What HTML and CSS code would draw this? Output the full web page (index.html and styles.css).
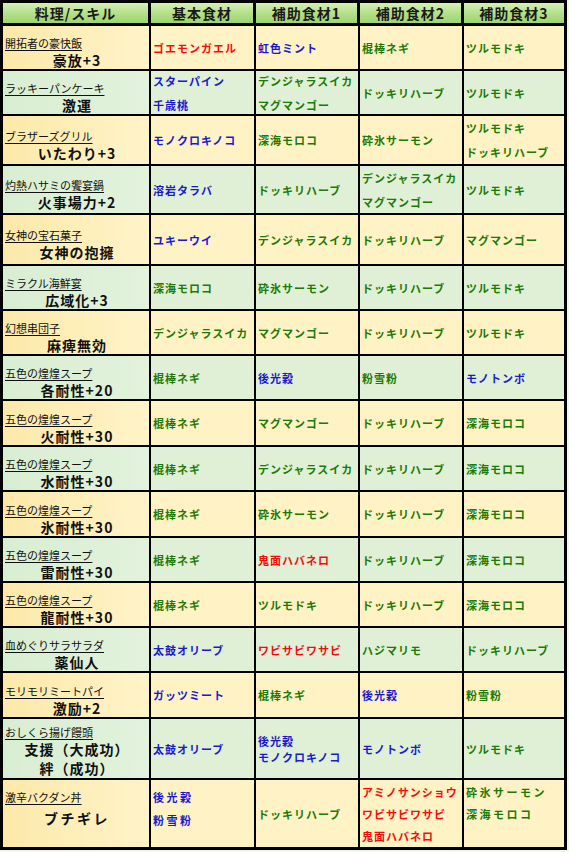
FILE: index.html
```html
<!DOCTYPE html>
<html lang="ja">
<head>
<meta charset="utf-8">
<title>料理/スキル 食材表</title>
<link rel="stylesheet" href="styles.css">
</head>
<body>
<table class="recipes">
  <thead>
    <tr>
      <th class="c1">料理/スキル</th>
      <th class="c2">基本食材</th>
      <th class="c3">補助食材1</th>
      <th class="c4">補助食材2</th>
      <th class="c5">補助食材3</th>
    </tr>
  </thead>
  <tbody>
    <tr class="y">
      <td class="dish"><div class="name">開拓者の豪快飯</div><div class="skill">豪放+3</div></td>
      <td><span class="r">ゴエモンガエル</span></td>
      <td><span class="b">虹色ミント</span></td>
      <td><span class="g">棍棒ネギ</span></td>
      <td><span class="g">ツルモドキ</span></td>
    </tr>
    <tr class="gr">
      <td class="dish"><div class="name">ラッキーパンケーキ</div><div class="skill">激運</div></td>
      <td><div class="pair"><span class="b">スターパイン</span><span class="b">千歳桃</span></div></td>
      <td><div class="pair"><span class="g">デンジャラスイカ</span><span class="g">マグマンゴー</span></div></td>
      <td><span class="g">ドッキリハーブ</span></td>
      <td><span class="g">ツルモドキ</span></td>
    </tr>
    <tr class="y h50">
      <td class="dish"><div class="name">ブラザーズグリル</div><div class="skill">いたわり+3</div></td>
      <td><span class="b">モノクロキノコ</span></td>
      <td><span class="g">深海モロコ</span></td>
      <td><span class="g">砕氷サーモン</span></td>
      <td><div class="pair"><span class="g">ツルモドキ</span><span class="g">ドッキリハーブ</span></div></td>
    </tr>
    <tr class="gr h49">
      <td class="dish"><div class="name">灼熱ハサミの饗宴鍋</div><div class="skill">火事場力+2</div></td>
      <td><span class="b">溶岩タラバ</span></td>
      <td><span class="g">ドッキリハーブ</span></td>
      <td><div class="pair"><span class="g">デンジャラスイカ</span><span class="g">マグマンゴー</span></div></td>
      <td><span class="g">ツルモドキ</span></td>
    </tr>
    <tr class="y h51">
      <td class="dish"><div class="name">女神の宝石菓子</div><div class="skill">女神の抱擁</div></td>
      <td><span class="b">ユキーウイ</span></td>
      <td><span class="g">デンジャラスイカ</span></td>
      <td><span class="g">ドッキリハーブ</span></td>
      <td><span class="g">マグマンゴー</span></td>
    </tr>
    <tr class="gr">
      <td class="dish"><div class="name">ミラクル海鮮宴</div><div class="skill">広域化+3</div></td>
      <td><span class="g">深海モロコ</span></td>
      <td><span class="g">砕氷サーモン</span></td>
      <td><span class="g">ドッキリハーブ</span></td>
      <td><span class="g">ツルモドキ</span></td>
    </tr>
    <tr class="y">
      <td class="dish"><div class="name">幻想串団子</div><div class="skill">麻痺無効</div></td>
      <td><span class="g">デンジャラスイカ</span></td>
      <td><span class="g">マグマンゴー</span></td>
      <td><span class="g">ドッキリハーブ</span></td>
      <td><span class="g">ツルモドキ</span></td>
    </tr>
    <tr class="gr">
      <td class="dish"><div class="name">五色の煌煌スープ</div><div class="skill">各耐性+20</div></td>
      <td><span class="g">棍棒ネギ</span></td>
      <td><span class="b">後光穀</span></td>
      <td><span class="g">粉雪粉</span></td>
      <td><span class="b">モノトンボ</span></td>
    </tr>
    <tr class="y h46">
      <td class="dish"><div class="name">五色の煌煌スープ</div><div class="skill">火耐性+30</div></td>
      <td><span class="g">棍棒ネギ</span></td>
      <td><span class="g">マグマンゴー</span></td>
      <td><span class="g">ドッキリハーブ</span></td>
      <td><span class="g">深海モロコ</span></td>
    </tr>
    <tr class="gr">
      <td class="dish"><div class="name">五色の煌煌スープ</div><div class="skill">水耐性+30</div></td>
      <td><span class="g">棍棒ネギ</span></td>
      <td><span class="g">デンジャラスイカ</span></td>
      <td><span class="g">ドッキリハーブ</span></td>
      <td><span class="g">深海モロコ</span></td>
    </tr>
    <tr class="y h46">
      <td class="dish"><div class="name">五色の煌煌スープ</div><div class="skill">氷耐性+30</div></td>
      <td><span class="g">棍棒ネギ</span></td>
      <td><span class="g">砕氷サーモン</span></td>
      <td><span class="g">ドッキリハーブ</span></td>
      <td><span class="g">深海モロコ</span></td>
    </tr>
    <tr class="gr">
      <td class="dish"><div class="name">五色の煌煌スープ</div><div class="skill">雷耐性+30</div></td>
      <td><span class="g">棍棒ネギ</span></td>
      <td><span class="r">鬼面ハバネロ</span></td>
      <td><span class="g">ドッキリハーブ</span></td>
      <td><span class="g">深海モロコ</span></td>
    </tr>
    <tr class="y">
      <td class="dish"><div class="name">五色の煌煌スープ</div><div class="skill">龍耐性+30</div></td>
      <td><span class="g">棍棒ネギ</span></td>
      <td><span class="g">ツルモドキ</span></td>
      <td><span class="g">ドッキリハーブ</span></td>
      <td><span class="g">深海モロコ</span></td>
    </tr>
    <tr class="gr">
      <td class="dish"><div class="name">血めぐりサラサラダ</div><div class="skill">薬仙人</div></td>
      <td><span class="b">太鼓オリーブ</span></td>
      <td><span class="r">ワビサビワサビ</span></td>
      <td><span class="g">ハジマリモ</span></td>
      <td><span class="g">ドッキリハーブ</span></td>
    </tr>
    <tr class="y h46">
      <td class="dish"><div class="name">モリモリミートパイ</div><div class="skill">激励+2</div></td>
      <td><span class="b">ガッツミート</span></td>
      <td><span class="g">棍棒ネギ</span></td>
      <td><span class="b">後光穀</span></td>
      <td><span class="g">粉雪粉</span></td>
    </tr>
    <tr class="gr h61">
      <td class="dish tri"><div class="name">おしくら揚げ饅頭</div><div class="skill">支援（大成功）</div><div class="skill">絆（成功）</div></td>
      <td><span class="b">太鼓オリーブ</span></td>
      <td><div class="tight"><span class="b">後光穀</span><span class="b">モノクロキノコ</span></div></td>
      <td><span class="b">モノトンボ</span></td>
      <td><span class="g">ツルモドキ</span></td>
    </tr>
    <tr class="y last">
      <td class="dish top1"><div class="name">激辛バクダン丼</div><div class="skill big">ブチギレ</div></td>
      <td class="top2"><div class="stack wide"><span class="b">後光穀</span><span class="b">粉雪粉</span></div></td>
      <td><span class="g">ドッキリハーブ</span></td>
      <td><div class="stack"><span class="r">アミノサンショウ</span><span class="r">ワビサビワサビ</span><span class="r">鬼面ハバネロ</span></div></td>
      <td class="top3"><div class="stack wide"><span class="g">砕氷サーモン</span><span class="g">深海モロコ</span></div></td>
    </tr>
  </tbody>
</table>
</body>
</html>
```

FILE: styles.css
```css
* { box-sizing: border-box; }

html, body {
  margin: 0;
  padding: 0;
  background: #eef8e6;
}

.recipes {
  border-collapse: separate;
  border-spacing: 0;
  border: 3px solid #000;
  width: 567px;
  table-layout: fixed;
  font-family: "Noto Sans CJK JP", "Noto Sans", sans-serif;
  color: #111;
}

.recipes th,
.recipes td {
  padding: 0;
  border-right: 2px solid #000;
  border-bottom: 2px solid #000;
}

.recipes th:last-child,
.recipes td:last-child { border-right: 0; }

.recipes tr.last td { border-bottom: 0; }

.c1 { width: 148px; }
.c2 { width: 105px; }
.c3 { width: 104px; }
.c4 { width: 104px; }
.c5 { width: 100px; }

.recipes thead th {
  height: 23px;
  border-bottom-width: 3px;
  border-right-width: 3px;
  background: linear-gradient(to bottom, #d4f0b2 0%, #b2df86 55%, #9ed46e 100%);
  font-size: 14px;
  font-weight: 700;
  letter-spacing: 1px;
  line-height: 20px;
  text-align: center;
  color: #1a1a1a;
}
.recipes thead th:last-child { border-right: 0; }

.recipes tbody td {
  height: 45px;
  vertical-align: middle;
  padding-left: 2px;
}

.recipes tr.h46 td { height: 46px; }
.recipes tr.h49 td { height: 49px; }
.recipes tr.h50 td { height: 50px; }
.recipes tr.h51 td { height: 51px; }
.recipes tr.h61 td { height: 61px; }
.recipes tr.last td { height: 67px; }

tr.y td { background: #fff2c4; }
tr.gr td { background: #dff0d6; }
tr.y td.dish { background: linear-gradient(to right, #fce9a9, #fff3c8); }
tr.gr td.dish { background: linear-gradient(to right, #d8eed2, #e2f2dc); }

.recipes tbody td.dish { padding-top: 9px; }
.dish .name {
  font-size: 11px;
  line-height: 16px;
  text-decoration: underline;
  text-underline-offset: 2px;
  white-space: nowrap;
  color: #111;
}
.dish .skill {
  font-size: 14px;
  font-weight: 700;
  letter-spacing: 1px;
  line-height: 18px;
  text-align: center;
  white-space: nowrap;
  color: #111;
}
.recipes tbody td.dish.tri { padding-top: 5px; }
.dish.tri .skill { line-height: 19px; }

.recipes tbody td span {
  display: block;
  font-size: 11px;
  font-weight: 700;
  letter-spacing: 1px;
  line-height: 14px;
  white-space: nowrap;
}

.pair { display: flex; flex-direction: column; gap: 10px; }
.tight { display: flex; flex-direction: column; gap: 2px; }
.stack { display: flex; flex-direction: column; gap: 8px; }
.stack.wide span { letter-spacing: 2.5px; }

.recipes tr.last td.top1 { vertical-align: top; padding-top: 9px; }
.recipes tr.last td.top1 .skill.big { line-height: 26px; letter-spacing: 2.5px; }
.recipes tr.last td.top2 { vertical-align: top; padding-top: 10px; }
.recipes tr.last td.top3 { vertical-align: top; padding-top: 5px; }
.top2 .stack { gap: 9px; }

.r { color: #f40d0d; }
.b { color: #1a1ad0; }
.g { color: #1d7a06; }
```
